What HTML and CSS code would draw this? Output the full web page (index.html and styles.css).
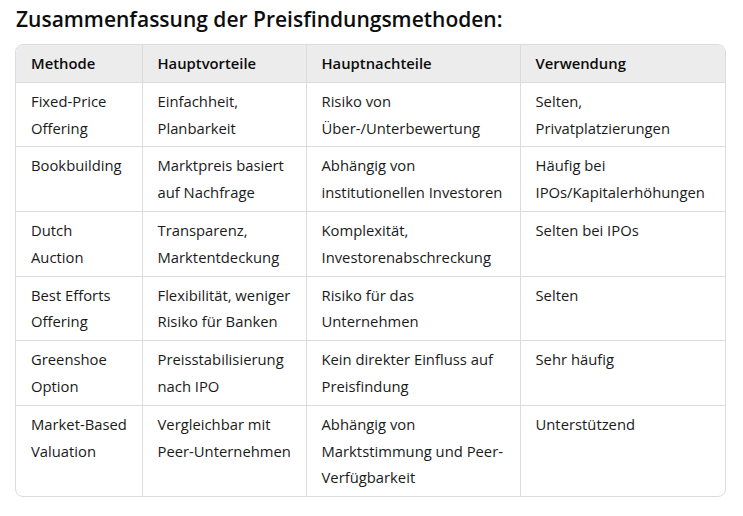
FILE: index.html
```html
<!DOCTYPE html>
<html lang="de">
<head>
<meta charset="utf-8">
<link rel="stylesheet" href="styles.css">
</head>
<body>
<div class="page">
  <h3 class="title">Zusammenfassung der Preisfindungsmethoden:</h3>
  <div class="table-wrap">
    <table class="summary">
      <colgroup>
        <col class="c1"><col class="c2"><col class="c3"><col class="c4">
      </colgroup>
      <thead>
        <tr><th>Methode</th><th>Hauptvorteile</th><th>Hauptnachteile</th><th>Verwendung</th></tr>
      </thead>
      <tbody>
        <tr><td>Fixed-Price<br>Offering</td><td>Einfachheit,<br>Planbarkeit</td><td>Risiko von<br>Über-/Unterbewertung</td><td>Selten,<br>Privatplatzierungen</td></tr>
        <tr><td>Bookbuilding</td><td>Marktpreis basiert<br>auf Nachfrage</td><td>Abhängig von<br>institutionellen Investoren</td><td>Häufig bei<br>IPOs/Kapitalerhöhungen</td></tr>
        <tr><td>Dutch<br>Auction</td><td>Transparenz,<br>Marktentdeckung</td><td>Komplexität,<br>Investorenabschreckung</td><td>Selten bei IPOs</td></tr>
        <tr><td>Best Efforts<br>Offering</td><td>Flexibilität, weniger<br>Risiko für Banken</td><td>Risiko für das<br>Unternehmen</td><td>Selten</td></tr>
        <tr><td>Greenshoe<br>Option</td><td>Preisstabilisierung<br>nach IPO</td><td>Kein direkter Einfluss auf<br>Preisfindung</td><td>Sehr häufig</td></tr>
        <tr><td>Market-Based<br>Valuation</td><td>Vergleichbar mit<br>Peer-Unternehmen</td><td>Abhängig von<br>Marktstimmung und Peer-<br>Verfügbarkeit</td><td>Unterstützend</td></tr>
      </tbody>
    </table>
  </div>
</div>
</body>
</html>
```
FILE: styles.css
```css
html, body {
  margin: 0;
  padding: 0;
  background: #ffffff;
}
body {
  font-family: "Open Sans", "Noto Sans", "Liberation Sans", sans-serif;
  color: #1a1a1a;
}
.page {
  padding: 0 0 0 15px;
  width: 711px;
}
.title {
  margin: 0;
  padding: 4px 0 0 1px;
  height: 44px;
  box-sizing: border-box;
  font-size: 21px;
  line-height: 30px;
  font-weight: 600;
  color: #0d0d0d;
}
.table-wrap {
  border: 1px solid #dcdcdc;
  border-radius: 8px;
  overflow: hidden;
}
.summary {
  width: 100%;
  border-collapse: collapse;
  table-layout: fixed;
  font-size: 14.8px;
  line-height: 26.8px;
}
.c1 { width: 126px; }
.c2 { width: 164px; }
.c3 { width: 214px; }
.c4 { width: auto; }
.summary th, .summary td {
  text-align: left;
  vertical-align: top;
  padding: 5px 10px 5px 15px;
  white-space: nowrap;
  border-left: 1px solid #dcdcdc;
  border-top: 1px solid #dcdcdc;
}
.summary th:first-child, .summary td:first-child {
  border-left: none;
  padding-left: 15px;
}
.summary thead th {
  border-top: none;
  background: #ececec;
  font-weight: 600;
  color: #0d0d0d;
}
```
